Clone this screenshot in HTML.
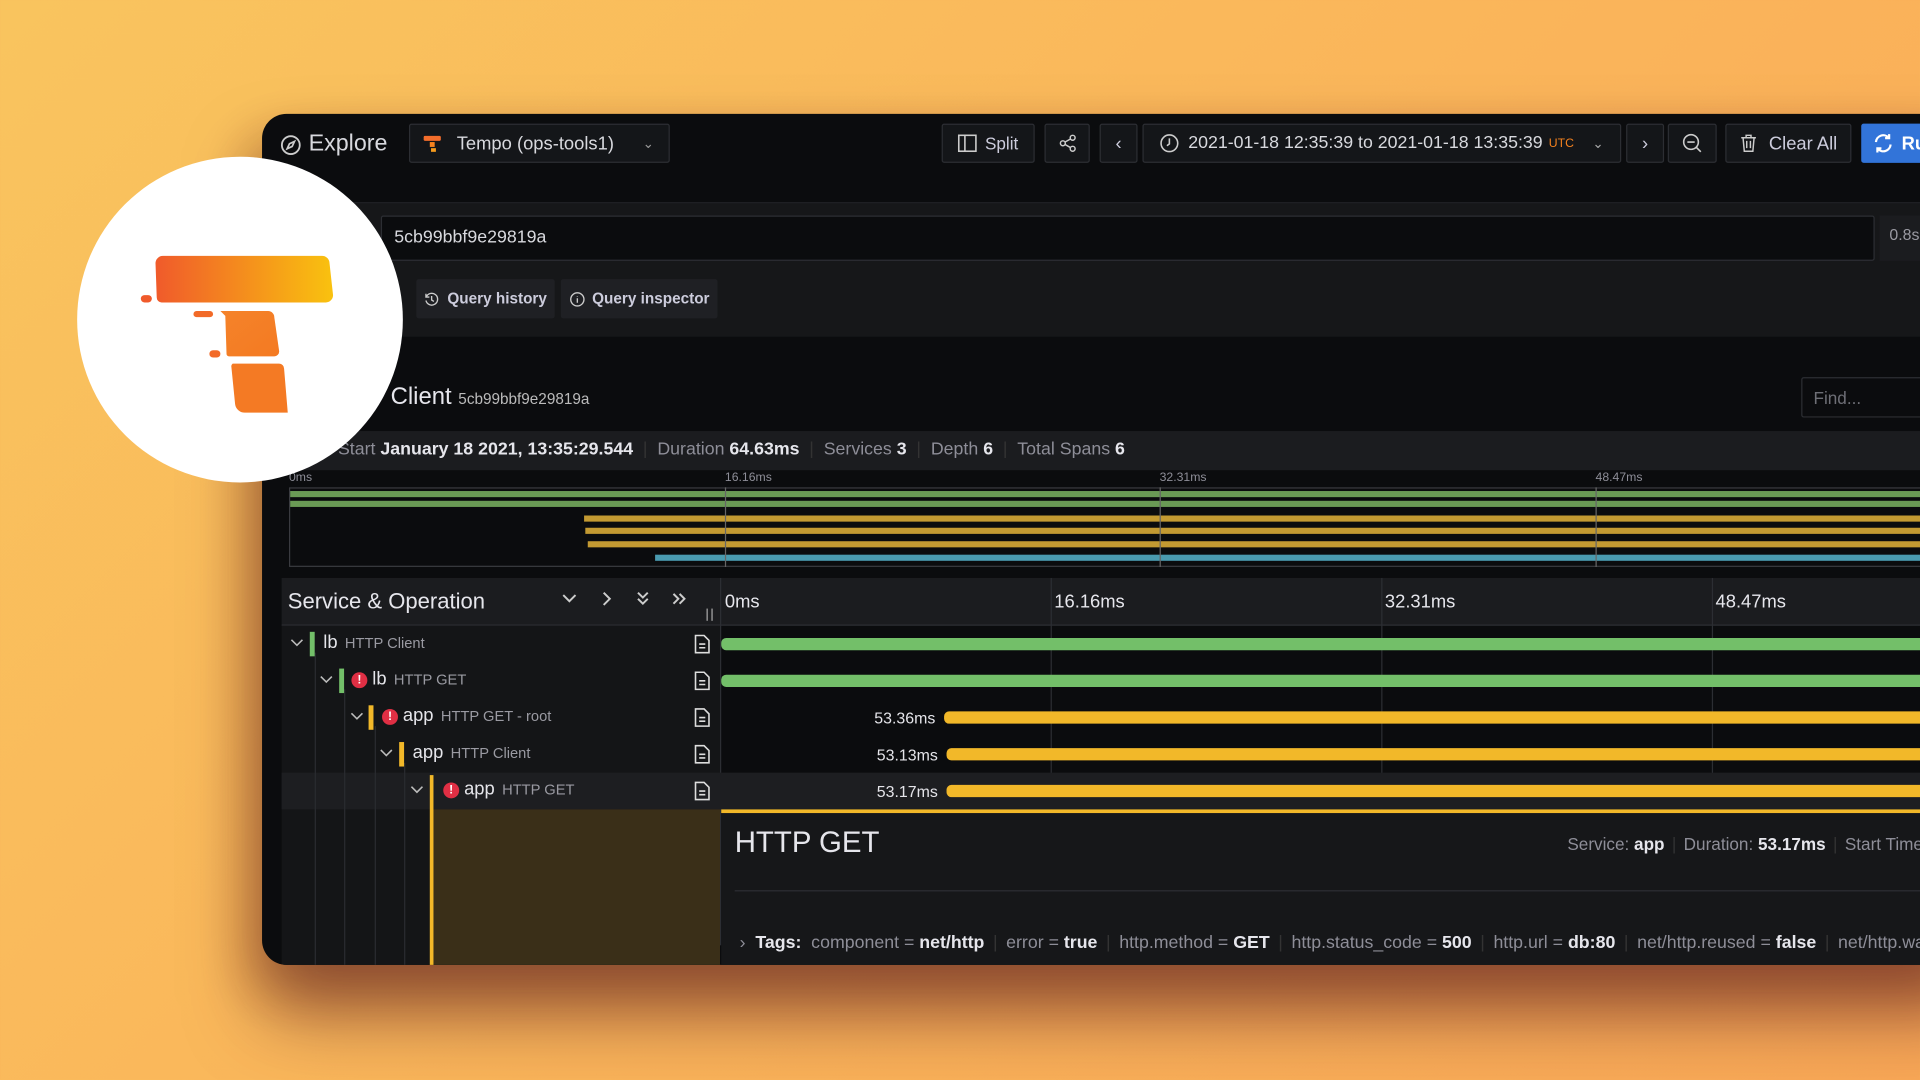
<!DOCTYPE html>
<html><head><meta charset="utf-8"><style>
*{box-sizing:border-box;margin:0;padding:0}
html,body{width:1920px;height:1080px;overflow:hidden}
body{background:linear-gradient(135deg,#f9c45e 0%,#fab45a 55%,#f9a857 100%);font-family:"Liberation Sans",sans-serif;}
#w{position:absolute;left:0;top:0;width:1568px;height:882px;transform:scale(1.22449);transform-origin:0 0}
.a{position:absolute}
.panel{left:214px;top:93px;width:1400px;height:695px;background:#0b0c0e;border-radius:20px 0 0 20px;overflow:hidden;box-shadow:0 40px 60px rgba(80,20,30,.55),-10px 20px 40px rgba(120,50,20,.3)}
.btn{position:absolute;top:8px;height:32px;background:#141619;border:1px solid #2c2e33;border-radius:2px;color:#ccccdc;font-size:14px;display:flex;align-items:center;justify-content:center;gap:6px}
.t{color:#ccccdc}
.g{color:#8e8e98}
.b{color:#e6e6ec;font-weight:bold}
svg{display:block}
.vl{position:absolute;width:1px;background:#3a3b40}
.row{position:absolute;left:16px;width:1400px;height:30px}
.lab{position:absolute;top:5px;font-size:15px;color:#e5e5ea;white-space:nowrap}
.lab small{font-size:12px;color:#9a9aa2;margin-left:6px}
.err{display:inline-block;width:13px;height:13px;border-radius:50%;background:#e02f44;color:#fff;font-size:10px;font-weight:bold;text-align:center;line-height:13px;margin-right:4px;vertical-align:1px}
.doc{position:absolute;left:351px;top:7px}
.dur{position:absolute;font-size:13px;color:#e5e5ea;top:8px}
.bar{position:absolute;height:10px;top:10px;border-radius:4px 0 0 4px}
</style></head><body><div id="w">
<div class="a panel">
 <!-- top bar -->
 <div class="a" style="left:15px;top:14px;display:flex;align-items:center;gap:6px;color:#d8d9de;font-size:19px">
  <svg width="17" height="17" viewBox="0 0 17 17"><circle cx="8.5" cy="8.5" r="7.3" fill="none" stroke="#ccc" stroke-width="1.5"/><path d="M11.5 5.5L9.6 9.6 5.5 11.5 7.4 7.4Z" fill="none" stroke="#ccc" stroke-width="1.4"/></svg>Explore</div>
 <div class="btn" style="left:120px;width:213px;justify-content:flex-start;padding-left:10px;font-size:15px;color:#d8d9de;gap:12px">
  <svg width="16" height="16" viewBox="0 0 16 16"><rect x="1" y="2" width="14" height="4" rx="1" fill="#f36d2b"/><rect x="6" y="7" width="4" height="4" fill="#f5821f"/><rect x="7" y="12" width="4" height="3" fill="#f79c1d"/></svg>Tempo (ops-tools1)<span style="margin-left:auto;margin-right:12px;color:#999;font-size:11px">&#8964;</span></div>
 <div class="btn" style="left:555px;width:76px"><svg width="16" height="16" viewBox="0 0 16 16"><rect x="1" y="1.5" width="14" height="13" fill="none" stroke="#ccc" stroke-width="1.3"/><line x1="6" y1="2" x2="6" y2="14" stroke="#ccc" stroke-width="1.3"/></svg>Split</div>
 <div class="btn" style="left:639px;width:37px"><svg width="16" height="16" viewBox="0 0 16 16" fill="none" stroke="#ccc" stroke-width="1.2"><circle cx="12" cy="3.5" r="2"/><circle cx="4" cy="8" r="2"/><circle cx="12" cy="12.5" r="2"/><path d="M5.8 7 10.2 4.5M5.8 9 10.2 11.5"/></svg></div>
 <div class="btn" style="left:684px;width:31px;font-size:15px">&#8249;</div>
 <div class="btn" style="left:719px;width:391px;gap:7px"><svg width="16" height="16" viewBox="0 0 16 16" fill="none" stroke="#ccc" stroke-width="1.3"><circle cx="8" cy="8" r="6.8"/><path d="M8 4v4.5L6 10"/></svg><span style="font-size:14.5px;color:#d8d9de">2021-01-18 12:35:39 to 2021-01-18 13:35:39</span><span style="color:#f5821f;font-size:10px;margin-left:-2px">UTC</span><span style="color:#aaa;font-size:11px;margin-left:8px">&#8964;</span></div>
 <div class="btn" style="left:1114px;width:31px;font-size:15px">&#8250;</div>
 <div class="btn" style="left:1148px;width:40px"><svg width="18" height="18" viewBox="0 0 18 18" fill="none" stroke="#ccc" stroke-width="1.3"><circle cx="8" cy="8" r="6"/><path d="M5 8h6M12.5 12.5 16 16"/></svg></div>
 <div class="btn" style="left:1195px;width:103px;gap:10px"><svg width="14" height="16" viewBox="0 0 14 16" fill="none" stroke="#ccc" stroke-width="1.2"><path d="M1 3.5h12M5 3.5V1.5h4v2M2.5 3.5l1 11h7l1-11M5.5 6v6M8.5 6v6"/></svg><span style="font-size:15px">Clear All</span></div>
 <div class="btn" style="left:1306px;width:120px;background:#3274d9;border-color:#3274d9;color:#fff;font-weight:bold;justify-content:flex-start;padding-left:8px;gap:6px"><svg width="18" height="18" viewBox="0 0 18 18" fill="none" stroke="#fff" stroke-width="1.8"><path d="M3 8a6 6 0 0 1 10.5-3.5M15 10a6 6 0 0 1-10.5 3.5"/><path d="M13.8 1.5v3.3h-3.3M4.2 16.5v-3.3h3.3"/></svg><span style="font-size:15px">Run</span></div>
 <!-- query area -->
 <div class="a" style="left:0;top:72px;width:1400px;height:110px;background:#161719;border-top:1px solid #1f2024"></div>
 <div class="a" style="left:97px;top:83px;width:1220px;height:37px;background:#0b0c0e;border:1px solid #2c2e33;border-radius:2px;color:#d8d9de;font-size:14.5px;padding:9px 10px">5cb99bbf9e29819a</div>
 <div class="a" style="left:1321px;top:83px;width:60px;height:37px;background:#1b1c1f;color:#9a9aa2;font-size:13px;padding:8px 8px">0.8s</div>
 <div class="btn" style="left:126px;top:135px;width:113px;height:32px;border:none;background:#1f2024;font-size:12.5px;font-weight:bold;color:#ccccdc"><svg width="13" height="13" viewBox="0 0 14 14" fill="none" stroke="#ccc" stroke-width="1.2"><path d="M2.2 5A5.2 5.2 0 1 1 2 8"/><path d="M2 2v3h3M7 4v3.5l2 1.3"/></svg>Query history</div>
 <div class="btn" style="left:244px;top:135px;width:128px;height:32px;border:none;background:#1f2024;font-size:12.5px;font-weight:bold;color:#ccccdc"><svg width="13" height="13" viewBox="0 0 14 14" fill="none" stroke="#ccc" stroke-width="1.2"><circle cx="7" cy="7" r="5.8"/><path d="M7 6v4M7 4v.5"/></svg>Query inspector</div>
 <!-- trace title -->
 <div class="a" style="left:105px;top:220px;font-size:19.5px;color:#e6e6ec">Client <span style="font-size:12.5px;color:#bbb">5cb99bbf9e29819a</span></div>
 <div class="a" style="left:1257px;top:215px;width:150px;height:33px;border:1px solid #2c2e33;border-radius:2px;background:#0b0c0e;color:#6e6f76;font-size:14px;padding:8px 9px">Find...</div>
 <!-- stats -->
 <div class="a" style="left:0;top:259px;width:1400px;height:32px;background:#1b1c1f;font-size:14.5px;padding:7px 0 0 62px;white-space:nowrap">
  <span class="g">Start</span> <span class="b">January 18 2021, 13:35:29.544</span><span style="color:#333;margin:0 8px">|</span><span class="g">Duration</span> <span class="b">64.63ms</span><span style="color:#333;margin:0 8px">|</span><span class="g">Services</span> <span class="b">3</span><span style="color:#333;margin:0 8px">|</span><span class="g">Depth</span> <span class="b">6</span><span style="color:#333;margin:0 8px">|</span><span class="g">Total Spans</span> <span class="b">6</span></div>
 <!-- minimap -->
 <div class="a" style="left:22px;top:291px;width:1400px;height:80px;font-size:10px;color:#8e8e98">
  <span class="a" style="left:0;top:1px">0ms</span><span class="a" style="left:356px;top:1px">16.16ms</span><span class="a" style="left:711px;top:1px">32.31ms</span><span class="a" style="left:1067px;top:1px">48.47ms</span>
  <div class="a" style="left:0;top:14px;width:1400px;height:65px;border:1px solid #3a3b40;background:#0b0c0e"></div>
  <div class="a" style="left:1px;top:17px;width:1400px;height:5px;background:#6a9a55"></div>
  <div class="a" style="left:1px;top:25px;width:1400px;height:5px;background:#6a9a55"></div>
  <div class="a" style="left:241px;top:37px;width:1200px;height:5px;background:#c39a32"></div>
  <div class="a" style="left:242px;top:47px;width:1200px;height:5px;background:#c39a32"></div>
  <div class="a" style="left:244px;top:58px;width:1200px;height:5px;background:#c39a32"></div>
  <div class="a" style="left:299px;top:69px;width:1200px;height:5px;background:#4a9bb0"></div>
  <div class="vl" style="left:356px;top:14px;height:65px;background:#666"></div>
  <div class="vl" style="left:711px;top:14px;height:65px;background:#666"></div>
  <div class="vl" style="left:1067px;top:14px;height:65px;background:#666"></div>
 </div>
 <!-- header -->
 <div class="a" style="left:16px;top:379px;width:1400px;height:39px;background:#1b1c1f;border-bottom:1px solid #2c2e33"></div>
 <div class="a" style="left:21px;top:388px;font-size:18px;color:#e6e6ec">Service &amp; Operation</div>
 <div class="a" style="left:245px;top:389px;color:#ccc;font-size:15px;display:flex;gap:18px">
  <svg width="12" height="14" viewBox="0 0 12 14" fill="none" stroke="#ccc" stroke-width="1.6"><path d="M1 4l5 5 5-5"/></svg>
  <svg width="12" height="14" viewBox="0 0 12 14" fill="none" stroke="#ccc" stroke-width="1.6"><path d="M4 2l5 5-5 5"/></svg>
  <svg width="12" height="14" viewBox="0 0 12 14" fill="none" stroke="#ccc" stroke-width="1.6"><path d="M2 2l4 4 4-4M2 7l4 4 4-4"/></svg>
  <svg width="12" height="14" viewBox="0 0 12 14" fill="none" stroke="#ccc" stroke-width="1.6"><path d="M1 3l4 4-4 4M6 3l4 4-4 4"/></svg></div>
 <div class="a" style="left:363px;top:404px;width:5px;height:10px;border-left:1px solid #aaa;border-right:1px solid #aaa"></div>
 <div class="vl" style="left:374px;top:379px;height:300px;background:#2c2e33"></div>
 <div class="a" style="left:378px;top:390px;font-size:15px;color:#e6e6ec">0ms</div>
 <div class="a" style="left:647px;top:390px;font-size:15px;color:#e6e6ec">16.16ms</div>
 <div class="a" style="left:917px;top:390px;font-size:15px;color:#e6e6ec">32.31ms</div>
 <div class="a" style="left:1187px;top:390px;font-size:15px;color:#e6e6ec">48.47ms</div>
 <div class="vl" style="left:644px;top:379px;height:189px;background:#2c2e33"></div>
 <div class="vl" style="left:914px;top:379px;height:189px;background:#2c2e33"></div>
 <div class="vl" style="left:1184px;top:379px;height:189px;background:#2c2e33"></div>
 <!-- left tree background -->
 <div class="a" style="left:16px;top:418px;width:358px;height:280px;background:#141517"></div>
 <div class="a" style="left:16px;top:538px;width:1400px;height:30px;background:#1d1e21"></div>
 <!-- guide lines -->
 <div class="vl" style="left:43px;top:440px;height:260px;background:#2a2b30"></div>
 <div class="vl" style="left:67px;top:470px;height:230px;background:#2a2b30"></div>
 <div class="vl" style="left:92px;top:500px;height:200px;background:#2a2b30"></div>
 <div class="vl" style="left:116px;top:530px;height:170px;background:#2a2b30"></div>
 <div class="a" style="left:138px;top:568px;width:236px;height:130px;background:#3a2f18"></div>
 <div class="a" style="left:137px;top:540px;width:3px;height:160px;background:#f2b829"></div>
 <!-- rows -->
 <div class="row" style="top:418px">
  <svg class="a" style="left:7px;top:10px" width="11" height="8" viewBox="0 0 11 8" fill="none" stroke="#bbb" stroke-width="1.3"><path d="M1 1.5l4.5 4.5 4.5-4.5"/></svg>
  <div class="a" style="left:23px;top:5px;width:4px;height:20px;background:#73bf69"></div>
  <div class="lab" style="left:34px">lb<small>HTTP Client</small></div></div>
 <div class="row" style="top:448px">
  <svg class="a" style="left:31px;top:10px" width="11" height="8" viewBox="0 0 11 8" fill="none" stroke="#bbb" stroke-width="1.3"><path d="M1 1.5l4.5 4.5 4.5-4.5"/></svg>
  <div class="a" style="left:47px;top:5px;width:4px;height:20px;background:#73bf69"></div>
  <div class="lab" style="left:57px"><span class="err">!</span>lb<small>HTTP GET</small></div></div>
 <div class="row" style="top:478px">
  <svg class="a" style="left:56px;top:10px" width="11" height="8" viewBox="0 0 11 8" fill="none" stroke="#bbb" stroke-width="1.3"><path d="M1 1.5l4.5 4.5 4.5-4.5"/></svg>
  <div class="a" style="left:71px;top:5px;width:4px;height:20px;background:#f2b829"></div>
  <div class="lab" style="left:82px"><span class="err">!</span>app<small>HTTP GET - root</small></div></div>
 <div class="row" style="top:508px">
  <svg class="a" style="left:80px;top:10px" width="11" height="8" viewBox="0 0 11 8" fill="none" stroke="#bbb" stroke-width="1.3"><path d="M1 1.5l4.5 4.5 4.5-4.5"/></svg>
  <div class="a" style="left:96px;top:5px;width:4px;height:20px;background:#f2b829"></div>
  <div class="lab" style="left:107px">app<small>HTTP Client</small></div></div>
 <div class="row" style="top:538px">
  <svg class="a" style="left:105px;top:10px" width="11" height="8" viewBox="0 0 11 8" fill="none" stroke="#bbb" stroke-width="1.3"><path d="M1 1.5l4.5 4.5 4.5-4.5"/></svg>
  <div class="lab" style="left:132px"><span class="err">!</span>app<small>HTTP GET</small></div></div>
 <!-- doc icons -->
 <svg class="a" style="left:353px;top:425px" width="13" height="16" viewBox="0 0 13 16" fill="none" stroke="#ddd" stroke-width="1.3"><path d="M1 1h7l4 4v10H1z M4 8h5M4 11h5"/></svg>
 <svg class="a" style="left:353px;top:455px" width="13" height="16" viewBox="0 0 13 16" fill="none" stroke="#ddd" stroke-width="1.3"><path d="M1 1h7l4 4v10H1z M4 8h5M4 11h5"/></svg>
 <svg class="a" style="left:353px;top:485px" width="13" height="16" viewBox="0 0 13 16" fill="none" stroke="#ddd" stroke-width="1.3"><path d="M1 1h7l4 4v10H1z M4 8h5M4 11h5"/></svg>
 <svg class="a" style="left:353px;top:515px" width="13" height="16" viewBox="0 0 13 16" fill="none" stroke="#ddd" stroke-width="1.3"><path d="M1 1h7l4 4v10H1z M4 8h5M4 11h5"/></svg>
 <svg class="a" style="left:353px;top:545px" width="13" height="16" viewBox="0 0 13 16" fill="none" stroke="#ddd" stroke-width="1.3"><path d="M1 1h7l4 4v10H1z M4 8h5M4 11h5"/></svg>
 <!-- bars -->
 <div class="bar" style="left:375px;top:428px;width:1100px;background:#73bf69"></div>
 <div class="bar" style="left:375px;top:458px;width:1100px;background:#73bf69"></div>
 <div class="dur" style="left:500px;top:486px">53.36ms</div><div class="bar" style="left:557px;top:488px;width:900px;background:#f2b829"></div>
 <div class="dur" style="left:502px;top:516px">53.13ms</div><div class="bar" style="left:559px;top:518px;width:900px;background:#f2b829"></div>
 <div class="dur" style="left:502px;top:546px">53.17ms</div><div class="bar" style="left:559px;top:548px;width:900px;background:#f2b829"></div>
 <!-- detail -->
 <div class="a" style="left:375px;top:568px;width:1100px;height:130px;background:#161719;border-top:3px solid #f2b829"></div>
 <div class="a" style="left:386px;top:582px;font-size:24px;color:#e6e6ec">HTTP GET</div>
 <div class="a" style="left:1066px;top:588px;font-size:14px;white-space:nowrap"><span class="g">Service:</span> <span class="b">app</span><span style="color:#333;margin:0 6px">|</span><span class="g">Duration:</span> <span class="b">53.17ms</span><span style="color:#333;margin:0 6px">|</span><span class="g">Start Time</span></div>
 <div class="a" style="left:386px;top:634px;width:1100px;height:1px;background:#2c2e33"></div>
 <div class="a" style="left:390px;top:669px;font-size:14.5px;white-space:nowrap;color:#8e8e98">&#8250; <span class="b" style="margin:0 8px 0 4px">Tags:</span>component = <span class="b">net/http</span><span style="color:#333;margin:0 7px">|</span>error = <span class="b">true</span><span style="color:#333;margin:0 7px">|</span>http.method = <span class="b">GET</span><span style="color:#333;margin:0 7px">|</span>http.status_code = <span class="b">500</span><span style="color:#333;margin:0 7px">|</span>http.url = <span class="b">db:80</span><span style="color:#333;margin:0 7px">|</span>net/http.reused = <span class="b">false</span><span style="color:#333;margin:0 7px">|</span>net/http.was_idle</div>
</div>
<!-- logo circle -->
<div class="a" style="left:63px;top:128px;width:266px;height:266px;border-radius:50%;background:#fff"></div>
<svg class="a" style="left:100px;top:200px" width="190" height="145" viewBox="100 200 190 145">
 <defs>
  <linearGradient id="g1" x1="0" x2="1" y1="0" y2="0"><stop offset="0" stop-color="#f05a2b"/><stop offset="1" stop-color="#f9c20f"/></linearGradient>
  <linearGradient id="g2" x1="0" x2="1" y1="0" y2="1"><stop offset="0" stop-color="#f5832a"/><stop offset="1" stop-color="#f47a22"/></linearGradient>
 </defs>
 <path d="M133 209H263a6 6 0 0 1 6 5l3 27a6 6 0 0 1-6 6H132a4 4 0 0 1-4-4l-1-28a6 6 0 0 1 6-6Z" fill="url(#g1)"/>
 <rect x="115" y="241" width="9" height="6" rx="3" fill="#f05a2b"/>
 <rect x="158" y="254" width="16" height="5" rx="2.5" fill="#f26a28"/>
 <path d="M180 254h39a5 5 0 0 1 5 5l4 28a4 4 0 0 1-4 4H187a2 2 0 0 1-2-2l-1-31Z" fill="url(#g2)"/>
 <rect x="171" y="286" width="9" height="6" rx="3" fill="#f26a28"/>
 <path d="M190 297h38a4 4 0 0 1 4 4l3 36H200a8 8 0 0 1-8-7l-3-30a3 3 0 0 1 1-3Z" fill="#f47a24"/>
</svg>
</div></body></html>
